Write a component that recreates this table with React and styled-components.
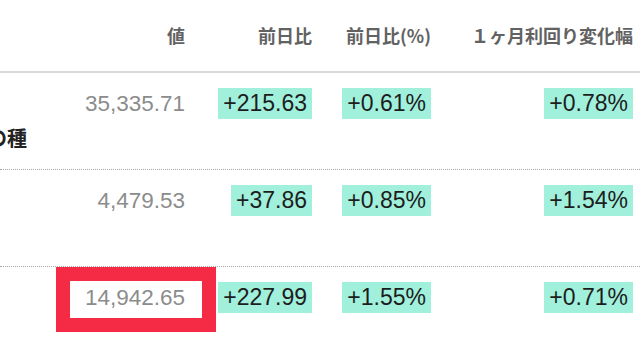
import React from 'react';
import styled, { createGlobalStyle } from 'styled-components';

const GlobalStyle = createGlobalStyle`
  html, body {
    margin: 0;
    padding: 0;
    background: #ffffff;
    overflow: hidden;
  }
  body {
    font-family: 'Liberation Sans', 'Noto Sans CJK JP', sans-serif;
  }
`;

const Table = styled.div`
  width: 640px;
  height: 360px;
  overflow: hidden;
  background: #ffffff;
`;

const Row = styled.div`
  display: grid;
  grid-template-columns: 40px 150px 127px 119px 202px;
  height: ${props => props.$height}px;
  border-bottom: ${props => props.$line};
  box-sizing: border-box;
`;

const HeadCell = styled.div`
  display: flex;
  justify-content: flex-end;
  align-items: center;
  padding-right: 5px;
  padding-bottom: 2px;
  font-family: 'Noto Sans CJK JP', sans-serif;
  font-size: 18px;
  font-weight: 700;
  color: #626262;
  white-space: nowrap;
`;

const LabelCell = styled.div`
  display: flex;
  justify-content: flex-end;
  overflow: hidden;
  padding-right: 13px;
  padding-top: ${props => props.$top}px;
  font-family: 'Noto Sans CJK JP', sans-serif;
  font-size: 20px;
  font-weight: 700;
  line-height: 28px;
  color: #222;
  white-space: nowrap;
`;

const Cell = styled.div`
  display: flex;
  justify-content: flex-end;
  align-items: flex-start;
  padding-top: 15px;
  padding-right: 5px;
`;

const Value = styled.span`
  font-size: 22.5px;
  line-height: 31px;
  color: #8c8c8c;
`;

const Marked = styled.span`
  display: inline-block;
  padding: 1px 17px 5px 15px;
  margin: -1px -17px -5px -15px;
  outline: 14px solid #f52a45;
`;

const Badge = styled.span`
  display: inline-block;
  background: #a0f0dc;
  color: #1d1d1d;
  font-size: 23px;
  line-height: 31px;
  padding: 0 5px;
`;

const rows = [
  { label: 'の種', labelTop: 51, value: '35,335.71', d: '+215.63', p: '+0.61%', m: '+0.78%' },
  { label: '', labelTop: 0, value: '4,479.53', d: '+37.86', p: '+0.85%', m: '+1.54%' },
  { label: '', labelTop: 0, value: '14,942.65', d: '+227.99', p: '+1.55%', m: '+0.71%', marked: true },
];

export default function App() {
  return (
    <>
      <GlobalStyle />
      <Table>
        <Row $height={73} $line="2px solid #d9d9d9">
          <HeadCell />
          <HeadCell>値</HeadCell>
          <HeadCell>前日比</HeadCell>
          <HeadCell>前日比(%)</HeadCell>
          <HeadCell>１ヶ月利回り変化幅</HeadCell>
        </Row>
        {rows.map((r, i) => (
          <Row key={i} $height={97} $line={i < 2 ? '1px dotted #a8a8a8' : 'none'}>
            <LabelCell $top={r.labelTop}>{r.label}</LabelCell>
            <Cell>
              {r.marked ? (
                <Marked><Value>{r.value}</Value></Marked>
              ) : (
                <Value>{r.value}</Value>
              )}
            </Cell>
            <Cell><Badge>{r.d}</Badge></Cell>
            <Cell><Badge>{r.p}</Badge></Cell>
            <Cell><Badge>{r.m}</Badge></Cell>
          </Row>
        ))}
      </Table>
    </>
  );
}
